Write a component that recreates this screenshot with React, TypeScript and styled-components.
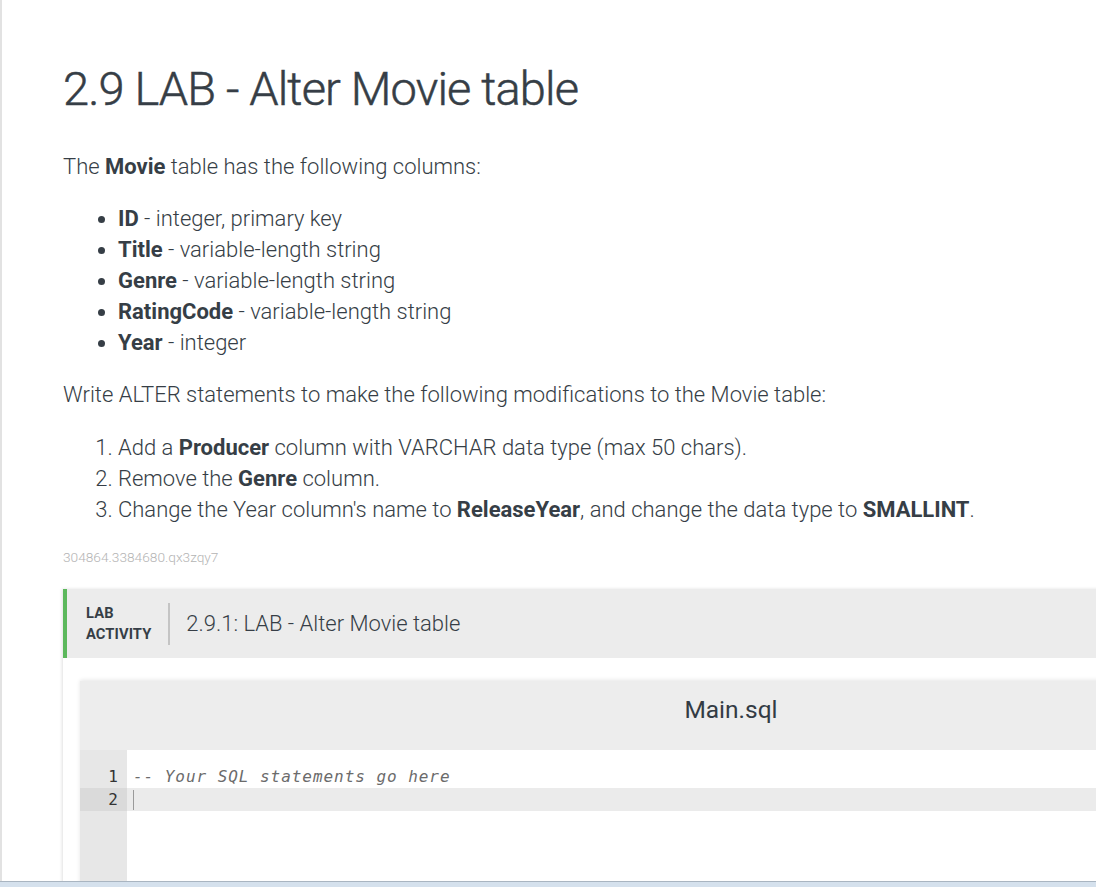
import React from 'react';
import styled, { createGlobalStyle } from 'styled-components';

const GlobalStyle = createGlobalStyle`
  html, body {
    margin: 0;
    padding: 0;
    overflow: hidden;
    background: #fff;
  }
  body {
    font-family: Roboto, "Liberation Sans", sans-serif;
    color: #363e46;
  }
`;

const Page = styled.div`
  height: 887px;
  display: flex;
  flex-direction: column;
  box-sizing: border-box;
`;

const Content = styled.main`
  flex: 1;
  border-left: 2px solid #e2e2e2;
  padding-left: 61px;
  overflow: hidden;
`;

const Title = styled.h1`
  margin: 60px 0 0;
  font-size: 47px;
  line-height: 58px;
  font-weight: 300;
  letter-spacing: -0.85px;
  -webkit-text-stroke: 0.5px #363e46;
  white-space: nowrap;
`;

const Para = styled.p<{ top: number }>`
  margin: ${({ top }) => top}px 0 0;
  font-size: 22px;
  line-height: 31px;
  font-weight: 300;
  white-space: nowrap;
`;

const Bullets = styled.ul`
  margin: 21px 0 0;
  padding-left: 55px;
  font-size: 22px;
  line-height: 31px;
  font-weight: 300;
  white-space: nowrap;
`;

const Steps = styled.ol`
  margin: 22px 0 0;
  padding-left: 55px;
  font-size: 22px;
  line-height: 31px;
  font-weight: 300;
  white-space: nowrap;
`;

const B = styled.strong`
  font-weight: 700;
`;

const Ident = styled.div`
  margin-top: 24px;
  font-size: 13.7px;
  line-height: 16px;
  font-weight: 300;
  color: #b4b4b4;
`;

const Lab = styled.section`
  margin-top: 24px;
  width: 1336px;
  box-shadow: -1px 0 3px rgba(0, 0, 0, 0.12);
  padding-bottom: 40px;
`;

const LabHeader = styled.header`
  height: 69px;
  display: flex;
  align-items: center;
  background: #ececec;
  border-left: 4px solid #5cb85c;
  box-sizing: border-box;
  padding-left: 19px;
`;

const LabTag = styled.div`
  font-size: 14.7px;
  line-height: 21px;
  font-weight: 700;
  letter-spacing: 0.1px;
  padding-right: 17px;
  border-right: 2px solid #c4c4c4;
`;

const LabTitle = styled.div`
  font-size: 22px;
  font-weight: 300;
  padding-left: 16px;
`;

const Editor = styled.div`
  margin: 23px 17px 0;
  box-shadow: 0 -1px 4px rgba(0, 0, 0, 0.1);
`;

const FileBar = styled.div`
  height: 69px;
  box-sizing: border-box;
  padding-bottom: 12px;
  display: flex;
  align-items: center;
  justify-content: center;
  background: #ededed;
  font-size: 24.5px;
  font-weight: 400;
  color: #333b44;
`;

const CodeArea = styled.div`
  display: grid;
  grid-template-columns: 47px 1fr;
  align-content: start;
  padding-top: 15px;
  background: linear-gradient(to right, #e7e7e7 47px, #fff 47px);
  min-height: 200px;
  font-family: "DejaVu Sans Mono", "Liberation Mono", monospace;
  font-size: 16px;
`;

const LineNo = styled.div<{ active?: boolean }>`
  height: 23px;
  line-height: 23px;
  text-align: right;
  padding-right: 9px;
  color: #333;
  background: ${({ active }) => (active ? '#dadada' : 'transparent')};
`;

const CodeLine = styled.div<{ active?: boolean }>`
  height: 23px;
  line-height: 23px;
  padding-left: 6px;
  white-space: pre;
  background: ${({ active }) => (active ? '#ebebeb' : 'transparent')};
`;

const Comment = styled.span`
  font-style: italic;
  color: #6b6b6b;
  letter-spacing: 0.95px;
`;

const Cursor = styled.span`
  display: inline-block;
  width: 1px;
  height: 20px;
  margin-top: 2px;
  background: #9a9a9a;
  vertical-align: top;
`;

const Taskbar = styled.div`
  height: 5px;
  border-top: 1px solid #a9b5c1;
  background: #d5e1ed;
`;

export default function App() {
  return (
    <Page>
      <GlobalStyle />
      <Content>
        <Title>2.9 LAB - Alter Movie table</Title>
        <Para top={33}>
          The <B>Movie</B> table has the following columns:
        </Para>
        <Bullets>
          <li><B>ID</B> - integer, primary key</li>
          <li><B>Title</B> - variable-length string</li>
          <li><B>Genre</B> - variable-length string</li>
          <li><B>RatingCode</B> - variable-length string</li>
          <li><B>Year</B> - integer</li>
        </Bullets>
        <Para top={21}>
          Write ALTER statements to make the following modifications to the Movie table:
        </Para>
        <Steps>
          <li>Add a <B>Producer</B> column with VARCHAR data type (max 50 chars).</li>
          <li>Remove the <B>Genre</B> column.</li>
          <li>
            Change the Year column's name to <B>ReleaseYear</B>, and change the data type to <B>SMALLINT</B>.
          </li>
        </Steps>
        <Ident>304864.3384680.qx3zqy7</Ident>
        <Lab>
          <LabHeader>
            <LabTag>LAB<br />ACTIVITY</LabTag>
            <LabTitle>2.9.1: LAB - Alter Movie table</LabTitle>
          </LabHeader>
          <Editor>
            <FileBar>Main.sql</FileBar>
            <CodeArea>
              <LineNo>1</LineNo>
              <CodeLine><Comment>-- Your SQL statements go here</Comment></CodeLine>
              <LineNo active>2</LineNo>
              <CodeLine active><Cursor /></CodeLine>
            </CodeArea>
          </Editor>
        </Lab>
      </Content>
      <Taskbar />
    </Page>
  );
}
